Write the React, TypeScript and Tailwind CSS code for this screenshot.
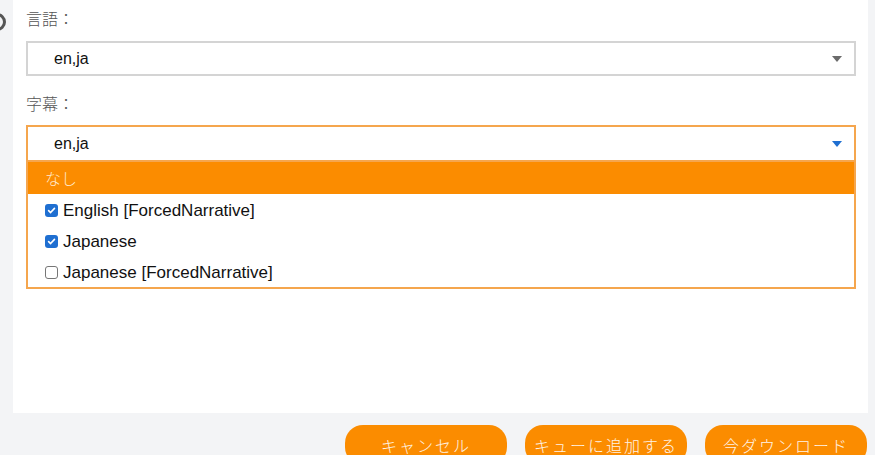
import React from "react";

const Check = ({ checked }: { checked: boolean }) =>
  checked ? (
    <span className="flex h-[13px] w-[13px] items-center justify-center rounded-[3px] bg-[#1f6fd1]">
      <svg width="9" height="9" viewBox="0 0 10 10">
        <path d="M1.8 5.2 L4 7.3 L8.3 2.6" fill="none" stroke="#fff" strokeWidth="1.8" strokeLinecap="round" strokeLinejoin="round" />
      </svg>
    </span>
  ) : (
    <span className="h-[13px] w-[13px] rounded-[3px] border border-[#767676] bg-white" />
  );

export default function App() {
  const sans = { fontFamily: '"Liberation Sans", Arial, "Noto Sans CJK JP", sans-serif' };
  const cjk = { fontFamily: '"Noto Sans CJK JP", sans-serif' };
  return (
    <div className="flex h-[455px] w-[875px] flex-col overflow-hidden bg-[#f3f4f6]" style={sans}>
      <div className="flex h-[413px] shrink-0">
        <div className="w-[13px] shrink-0 overflow-hidden pt-[13px]">
          <div className="-ml-[12px] h-[18px] w-[18px] rounded-full border-[3px] border-[#555]" />
        </div>
        <div className="flex w-[855px] flex-col bg-white pl-[13px] pr-[12px]">
          <div className="mt-[6px] h-[24px] text-[16px] font-light leading-[24px] text-[#555]" style={cjk}>言語：</div>
          <div className="mt-[11px] flex h-[35px] items-center justify-between border-2 border-[#d4d4d4] pl-[26px] pr-[12px]">
            <span className="text-[16px] text-[#111]">en,ja</span>
            <svg width="10" height="6" viewBox="0 0 10 6"><path d="M0 0 H10 L5 6 Z" fill="#6b6b6b" /></svg>
          </div>
          <div className="mt-[15px] h-[24px] text-[16px] font-light leading-[24px] text-[#555]" style={cjk}>字幕：</div>
          <div className="mt-[10px] flex flex-col border-2 border-[#f5a64e]">
            <div className="flex h-[33px] items-center justify-between pl-[26px] pr-[12px]">
              <span className="text-[16px] text-[#111]">en,ja</span>
              <svg width="10" height="6" viewBox="0 0 10 6"><path d="M0 0 H10 L5 6 Z" fill="#1f6fd1" /></svg>
            </div>
            <div className="border-t-2 border-[#f5a64e]">
              <div className="flex h-[32px] items-center bg-[#fb8c00] pl-[17px] text-[16px] font-light text-[#ffe9cf]" style={cjk}>なし</div>
              {[
                ["English [ForcedNarrative]", true],
                ["Japanese", true],
                ["Japanese [ForcedNarrative]", false],
              ].map(([label, c]) => (
                <div key={label as string} className="flex h-[31px] items-center gap-[5px] pl-[17px] pt-[2px] text-[17px] text-[#111]">
                  <Check checked={c as boolean} />
                  <span>{label as string}</span>
                </div>
              ))}
            </div>
          </div>
        </div>
      </div>
      <div className="mt-[12px] flex justify-end gap-[18px] pr-[8px]" style={cjk}>
        {["キャンセル", "キューに追加する", "今ダウンロード"].map((t) => (
          <div key={t} className="flex h-[40px] w-[162px] items-center justify-center rounded-[18px] bg-[#fb8c00] text-[16px] font-light tracking-[2px] text-[#fff3e6]">
            {t}
          </div>
        ))}
      </div>
    </div>
  );
}
